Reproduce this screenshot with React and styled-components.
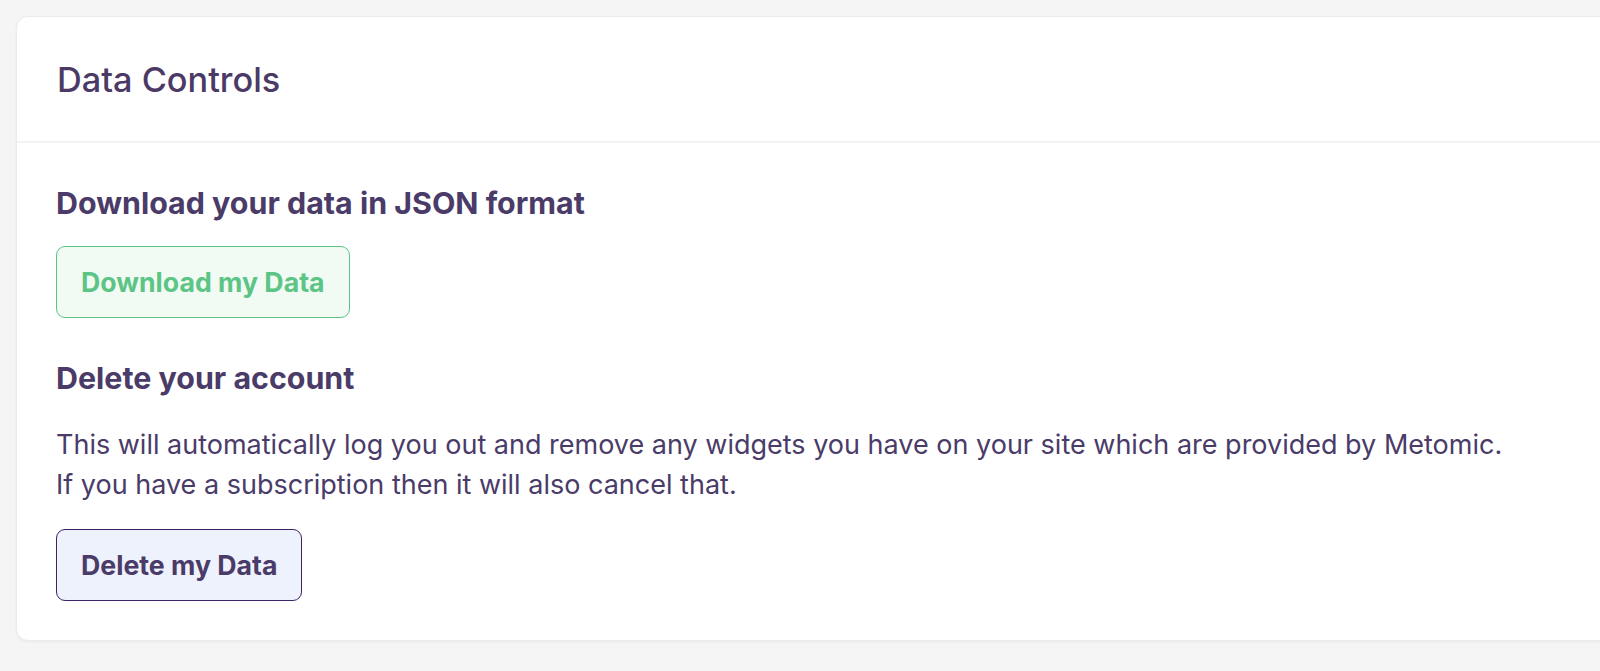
import styled, { createGlobalStyle } from "styled-components";

const Global = createGlobalStyle`
  html, body {
    margin: 0;
    background: #f5f5f5;
    font-family: Inter, "Noto Sans", sans-serif;
    color: #4a3b68;
    overflow: hidden;
  }
`;

const Page = styled.div`
  padding: 16px 0 0 16px;
  height: 671px;
  box-sizing: border-box;
`;

const Card = styled.section`
  margin-right: -20px;
  height: 625px;
  box-sizing: border-box;
  background: #ffffff;
  border: 1px solid #ebebeb;
  border-radius: 12px;
  box-shadow: 0 1px 3px rgba(0, 0, 0, 0.05);
`;

const Header = styled.header`
  height: 124px;
  display: flex;
  align-items: center;
  padding: 0 40px;
  border-bottom: 2px solid #f3f2f7;
`;

const Title = styled.h2`
  margin: 0;
  font-size: 34.3px;
  font-weight: 500;
  color: #4b3a66;
`;

const Body = styled.div`
  padding: 40px 39px;
  display: flex;
  flex-direction: column;
  align-items: flex-start;
`;

const Heading = styled.h3`
  margin: ${(p) => p.$top || 0}px 0 0;
  font-size: 30.4px;
  font-weight: 700;
  line-height: 40px;
  color: #4a3b68;
`;

const Text = styled.p`
  margin: 27px 0 0;
  font-size: 27px;
  line-height: 40px;
  color: #4a3b68;
`;

const Button = styled.button`
  margin-top: ${(p) => p.$top}px;
  height: 72px;
  padding: 0 24px;
  box-sizing: border-box;
  border-radius: 9px;
  font-family: inherit;
  font-size: 26.7px;
  font-weight: 700;
  cursor: pointer;
  color: ${(p) => (p.$tone === "green" ? "#5cc585" : "#4a3b68")};
  background: ${(p) => (p.$tone === "green" ? "#f2faf4" : "#eef2fc")};
  border: 1.5px solid ${(p) => (p.$tone === "green" ? "#5cc585" : "#3b2366")};
`;

export default function App() {
  return (
    <>
      <Global />
      <Page>
        <Card>
          <Header>
            <Title>Data Controls</Title>
          </Header>
          <Body>
            <Heading>Download your data in JSON format</Heading>
            <Button $tone="green" $top={23}>Download my Data</Button>
            <Heading $top={40}>Delete your account</Heading>
            <Text>
              This will automatically log you out and remove any widgets you have on your site which are provided by Metomic.
              <br />
              If you have a subscription then it will also cancel that.
            </Text>
            <Button $tone="purple" $top={24}>Delete my Data</Button>
          </Body>
        </Card>
      </Page>
    </>
  );
}
